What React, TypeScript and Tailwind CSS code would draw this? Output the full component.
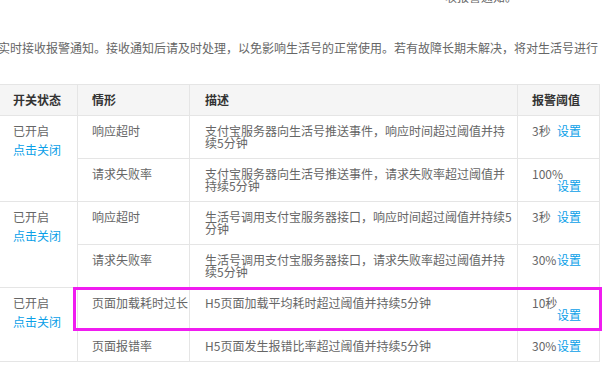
type AlarmRow = {
  name: string;
  desc: string;
  value: string;
  // the 设置 link drops to its own line when the value is too wide
  drop?: boolean;
};

const groups: AlarmRow[][] = [
  [
    { name: "响应超时", desc: "支付宝服务器向生活号推送事件，响应时间超过阈值并持续5分钟", value: "3秒" },
    { name: "请求失败率", desc: "支付宝服务器向生活号推送事件，请求失败率超过阈值并持续5分钟", value: "100%", drop: true },
  ],
  [
    { name: "响应超时", desc: "生活号调用支付宝服务器接口，响应时间超过阈值并持续5分钟", value: "3秒" },
    { name: "请求失败率", desc: "生活号调用支付宝服务器接口，请求失败率超过阈值并持续5分钟", value: "30%" },
  ],
  [
    { name: "页面加载耗时过长", desc: "H5页面加载平均耗时超过阈值并持续5分钟", value: "10秒", drop: true },
    { name: "页面报错率", desc: "H5页面发生报错比率超过阈值并持续5分钟", value: "30%" },
  ],
];

const cell = "border border-[#e5e5e5] pt-[9px] pb-[9px] align-top";
const link = "text-[#0aa0e8] cursor-pointer";

function ValueCell({ row }: { row: AlarmRow }) {
  if (row.drop) {
    return (
      <td className={`${cell} pl-[14px] pr-[18px]`}>
        <div>{row.value}</div>
        <div className="text-right">
          <a className={link}>设置</a>
        </div>
      </td>
    );
  }
  return (
    <td className={`${cell} pl-[14px] pr-[18px]`}>
      <div className="flex justify-between">
        <span>{row.value}</span>
        <a className={link}>设置</a>
      </div>
    </td>
  );
}

export default function App() {
  return (
    <div className="w-[603px] h-[383px] overflow-hidden bg-white text-[12px] leading-[12px] text-[#666] font-['Noto_Sans_CJK_SC','Noto_Sans',sans-serif]">
      {/* tail of the previous paragraph, scrolled mostly out of view */}
      <div className="h-[4px] overflow-hidden">
        <div className="-mt-[9px] ml-[445px] whitespace-nowrap">收报警通知。</div>
      </div>

      <p className="mt-[34px] -ml-[2px] whitespace-nowrap leading-[20px]">
        实时接收报警通知。接收通知后请及时处理，以免影响生活号的正常使用。若有故障长期未解决，将对生活号进行
      </p>

      <div className="relative mt-[26px]">
        <table className="-ml-[1px] w-[600px] table-fixed border-collapse">
          <colgroup>
            <col className="w-[78px]" />
            <col className="w-[112px]" />
            <col className="w-[328px]" />
            <col className="w-[82px]" />
          </colgroup>
          <thead>
            <tr className="bg-[#f5f5f5] text-[#333] font-bold text-left">
              <th className={`${cell} pl-[13px] font-bold`}>开关状态</th>
              <th className={`${cell} pl-[14px] font-bold`}>情形</th>
              <th className={`${cell} pl-[15px] font-bold`}>描述</th>
              <th className={`${cell} pl-[14px] font-bold`}>报警阈值</th>
            </tr>
          </thead>
          <tbody>
            {groups.map((rows, g) =>
              rows.map((row, i) => (
                <tr key={`${g}-${i}`}>
                  {i === 0 && (
                    <td rowSpan={rows.length} className={`${cell} pl-[13px]`}>
                      <div>已开启</div>
                      <a className={`${link} block mt-[7px]`}>点击关闭</a>
                    </td>
                  )}
                  <td className={`${cell} pl-[14px] pr-0 whitespace-nowrap`}>{row.name}</td>
                  <td className={`${cell} pl-[15px] pr-[4px]`}>{row.desc}</td>
                  <ValueCell row={row} />
                </tr>
              ))
            )}
          </tbody>
        </table>

        {/* highlight frame around the page-load row */}
        <div className="absolute left-[73px] top-[203px] w-[529px] h-[44px] border-[3px] border-[#f01cf0] pointer-events-none" />
      </div>
    </div>
  );
}
